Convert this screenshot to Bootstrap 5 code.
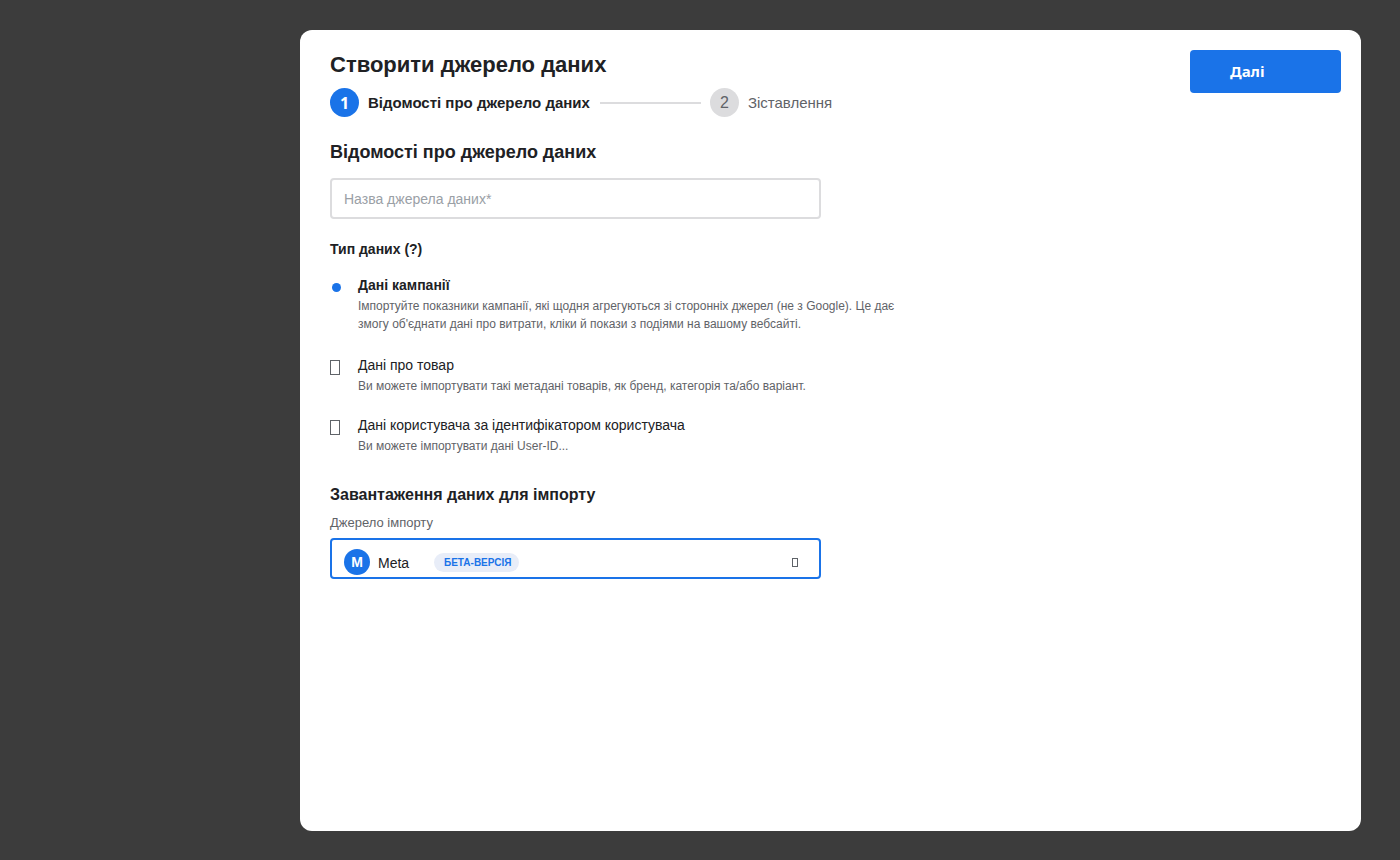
<!DOCTYPE html>
<html lang="uk">
<head>
<meta charset="utf-8">
<meta name="viewport" content="width=device-width, initial-scale=1">
<title>Створити джерело даних</title>
<link href="https://cdn.jsdelivr.net/npm/bootstrap@5.3.0/dist/css/bootstrap.min.css" rel="stylesheet">
<style>
  :root { --accent: #1a73e8; --ink: #202124; --muted: #5f6368; --line: #dcdcde; }
  body { background: #3c3c3c; color: var(--ink); font-family: "Liberation Sans", Arial, sans-serif; padding: 30px 39px 29px 300px; }
  .panel { background: #fff; border-radius: 12px; padding: 20px 20px 20px 30px; }
  .main-title { font-size: 22px; line-height: 30px; }
  .section-title { font-size: 18px; line-height: 24px; margin: 23px 0 14px; }
  .import-title { font-size: 16px; line-height: 20px; margin: 30px 0 5px; }
  .field-title { font-size: 14px; line-height: 20px; }
  .ui-font { font-family: "Noto Sans", "Open Sans", sans-serif; }
  .next-btn { width: 151px; height: 43px; padding: 0 40px; border: 0; border-radius: 4px; background: var(--accent); color: #fff; font-size: 15px; text-align: left; }
  .next-btn:hover, .next-btn:focus { background: #1765cc; color: #fff; }
  .step { font-size: 15px; line-height: 20px; }
  .step li { gap: 9px; }
  .step-dot { width: 29px; height: 29px; background: var(--line); color: var(--muted); font-size: 16px; line-height: 20px; }
  .step-dot.current { background: var(--accent); color: #fff; }
  .step-line { width: 101px; height: 2px; background: var(--line); margin: 0 9px 0 10px; }
  .step-next { color: var(--muted); }
  .form-column { max-width: 491px; }
  .boxed { height: 41px; border: 2px solid var(--line); border-radius: 4px; padding: 0 12px; font-size: 14px; color: var(--ink); box-shadow: none; }
  .boxed::placeholder { color: #9aa0a6; }
  .kinds { margin-top: 20px; }
  .choice { max-width: 570px; gap: 18px; margin-bottom: 20px; }
  .choice:first-of-type { margin-bottom: 22px; }
  .choice-mark { appearance: none; flex: none; width: 10px; height: 15px; margin: 5px 0 0; border: 1px solid var(--muted); }
  .choice-mark:checked { width: 9px; height: 9px; margin: 8px -1px 0 2px; border: 0; border-radius: 50%; background: var(--accent); }
  .choice-name { font-size: 14px; line-height: 20px; }
  .choice-note { font-size: 12px; line-height: 18px; color: var(--muted); margin-top: 2px; }
  .field-label { font-size: 13px; line-height: 18px; color: var(--muted); margin-bottom: 6px; }
  .source-select { border-color: var(--accent); background-image: none; padding: 10px 40px 0 46px; }
  .source-select:focus { border-color: var(--accent); box-shadow: none; }
  .source-extra { inset: 11px 23px auto 14px; pointer-events: none; }
  .source-logo { width: 26px; height: 26px; background: var(--accent); color: #fff; font-size: 14px; line-height: 26px; }
  .beta-pill { background: #e8edf8; color: var(--accent); font-size: 10px; line-height: 19px; padding: 0 8px 0 10px; margin-left: 64px; border-radius: 10px; }
  .caret-mark { width: 6px; height: 9px; border: 1px solid var(--muted); }
</style>
</head>
<body class="min-vh-100 d-flex flex-column">
<main class="panel flex-grow-1">
  <div class="d-flex justify-content-between align-items-start">
    <div>
      <h1 class="main-title fw-bold mb-2">Створити джерело даних</h1>
      <ol class="step list-unstyled d-flex align-items-center mb-0">
        <li class="d-flex align-items-center fw-bold" aria-current="step"><span class="step-dot current rounded-circle d-flex align-items-center justify-content-center ui-font">1</span>Відомості про джерело даних</li>
        <li class="step-line" aria-hidden="true"></li>
        <li class="step-next d-flex align-items-center"><span class="step-dot rounded-circle d-flex align-items-center justify-content-center">2</span>Зіставлення</li>
      </ol>
    </div>
    <button type="button" class="btn next-btn ui-font fw-bold">Далі</button>
  </div>

  <form>
    <div class="form-column">
      <h2 class="section-title fw-bold">Відомості про джерело даних</h2>
      <input type="text" id="name" class="form-control boxed" placeholder="Назва джерела даних*" aria-label="Назва джерела даних">
    </div>

    <fieldset class="kinds">
      <legend class="field-title fw-bold mb-3">Тип даних (?)</legend>
      <div class="choice d-flex">
        <input class="choice-mark" type="radio" name="kind" id="k1" checked>
        <label for="k1"><span class="choice-name d-block fw-bold">Дані кампанії</span><span class="choice-note d-block">Імпортуйте показники кампанії, які щодня агрегуються зі сторонніх джерел (не з Google). Це дає змогу об'єднати дані про витрати, кліки й покази з подіями на вашому вебсайті.</span></label>
      </div>
      <div class="choice d-flex">
        <input class="choice-mark" type="radio" name="kind" id="k2">
        <label for="k2"><span class="choice-name d-block">Дані про товар</span><span class="choice-note d-block">Ви можете імпортувати такі метадані товарів, як бренд, категорія та/або варіант.</span></label>
      </div>
      <div class="choice d-flex mb-0">
        <input class="choice-mark" type="radio" name="kind" id="k3">
        <label for="k3"><span class="choice-name d-block">Дані користувача за ідентифікатором користувача</span><span class="choice-note d-block">Ви можете імпортувати дані User-ID...</span></label>
      </div>
    </fieldset>

    <div class="form-column">
      <h2 class="import-title fw-bold">Завантаження даних для імпорту</h2>
      <label class="field-label" for="source">Джерело імпорту</label>
      <div class="position-relative">
        <select id="source" class="form-select boxed source-select"><option>Meta</option></select>
        <div class="source-extra position-absolute d-flex align-items-center">
          <span class="source-logo rounded-circle text-center fw-bold">M</span>
          <span class="beta-pill fw-bold">БЕТА-ВЕРСІЯ</span>
          <span class="caret-mark ms-auto"></span>
        </div>
      </div>
    </div>
  </form>
</main>
<script src="https://cdn.jsdelivr.net/npm/bootstrap@5.3.0/dist/js/bootstrap.bundle.min.js"></script>
</body>
</html>
